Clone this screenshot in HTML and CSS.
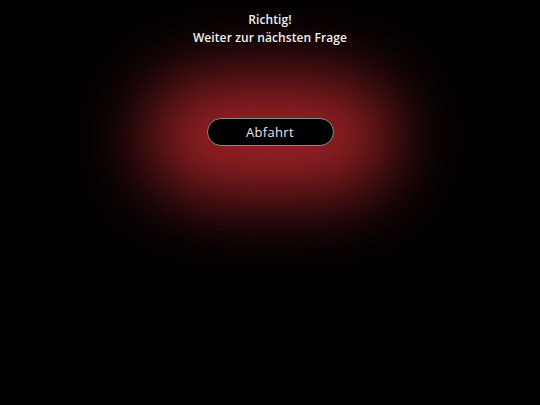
FILE: index.html
```html
<!DOCTYPE html>
<html lang="de">
<head>
<meta charset="utf-8">
<link rel="stylesheet" href="styles.css">
</head>
<body>
<div class="page">
  <div class="glow"></div>
  <header class="msg">
    <p class="title">Richtig!</p>
    <p class="sub">Weiter zur nächsten Frage</p>
  </header>
  <div class="action">
    <button class="btn">Abfahrt</button>
  </div>
</div>
</body>
</html>
```
FILE: styles.css
```css
html, body {
  margin: 0;
  padding: 0;
  background: #000;
}
.page {
  position: relative;
  width: 540px;
  height: 405px;
  overflow: hidden;
  background: #000;
  font-family: "Open Sans", "DejaVu Sans", sans-serif;
  color: #f2f2f2;
  display: flex;
  flex-direction: column;
  align-items: center;
}
.glow {
  position: absolute;
  left: 145px;
  top: 78px;
  width: 250px;
  height: 118px;
  border-radius: 59px;
  background: #a02226;
  filter: blur(38px);
}
.msg {
  position: relative;
  text-align: center;
  padding-top: 11px;
}
.msg p {
  margin: 0;
  font-size: 12px;
  line-height: 18px;
  letter-spacing: 0.1px;
}
.title {
  font-weight: 600;
}
.sub {
  font-weight: 600;
}
.action {
  position: relative;
  margin-top: 71px;
}
.btn {
  width: 127px;
  height: 28px;
  border-radius: 14px;
  border: 1px solid #8a8a8a;
  background: #000;
  color: #eaeaea;
  font-family: "Open Sans", "DejaVu Sans", sans-serif;
  font-size: 13px;
  font-weight: 400;
  letter-spacing: 0.3px;
  padding: 0;
}
```
